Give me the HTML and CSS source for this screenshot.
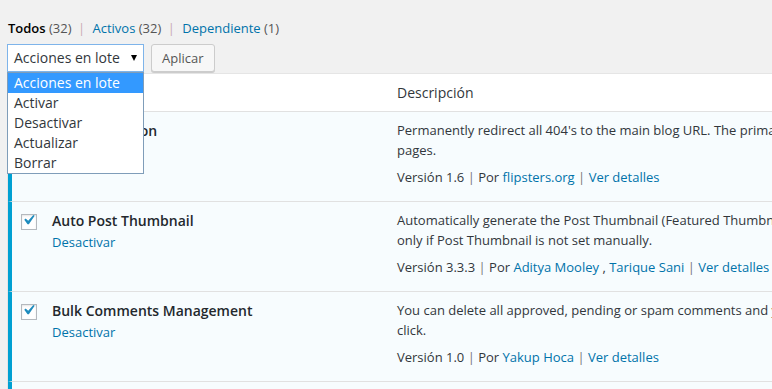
FILE: index.html
```html
<!DOCTYPE html>
<html lang="es">
<head>
  <meta charset="UTF-8">
  <title>Plugins</title>
  <link rel="stylesheet" href="styles.css">
</head>
<body>
  <div class="wrap">
    <ul class="subsubsub">
      <li class="current">Todos <span class="count">(32)</span></li>
      <li class="sep">|</li>
      <li><a href="#">Activos <span class="count">(32)</span></a></li>
      <li class="sep">|</li>
      <li><a href="#">Dependiente <span class="count">(1)</span></a></li>
    </ul>

    <div class="tablenav">
      <div class="bulk">
        <div class="select">Acciones en lote<span class="arrow"></span></div>
        <ul class="options">
          <li class="selected">Acciones en lote</li>
          <li>Activar</li>
          <li>Desactivar</li>
          <li>Actualizar</li>
          <li>Borrar</li>
        </ul>
      </div>
      <button class="button">Aplicar</button>
    </div>

    <table class="plugins">
      <colgroup>
        <col class="col-check">
        <col class="col-name">
        <col>
      </colgroup>
      <thead>
        <tr>
          <th class="check head-check"><span class="cb"></span></th>
          <th>Plugin</th>
          <th>Descripción</th>
        </tr>
      </thead>
      <tbody>
        <tr class="active">
          <th class="check"><span class="cb"><svg viewBox="3.5 5 14 14"><path d="M14.83 4.89l1.34.94-5.81 8.38H9.02L5.78 9.67l1.34-1.25 2.57 2.4z"/></svg></span></th>
          <td class="name">
            <strong>404 Redirection</strong>
            <a href="#">Desactivar</a>
          </td>
          <td class="desc">
            <p>Permanently redirect all 404's to the main blog URL. The primary purpose is to recover lost traffic from broken<br>pages.</p>
            <div class="meta">Versión 1.6 <span class="sep">|</span> Por <a href="#">flipsters.org</a> <span class="sep">|</span> <a href="#">Ver detalles</a></div>
          </td>
        </tr>
        <tr class="active">
          <th class="check"><span class="cb"><svg viewBox="3.5 5 14 14"><path d="M14.83 4.89l1.34.94-5.81 8.38H9.02L5.78 9.67l1.34-1.25 2.57 2.4z"/></svg></span></th>
          <td class="name">
            <strong>Auto Post Thumbnail</strong>
            <a href="#">Desactivar</a>
          </td>
          <td class="desc">
            <p>Automatically generate the Post Thumbnail (Featured Thumbnail) from the first image in post (or any custom post type)<br>only if Post Thumbnail is not set manually.</p>
            <div class="meta">Versión 3.3.3 <span class="sep">|</span> Por <a href="#">Aditya Mooley</a> , <a href="#">Tarique Sani</a> <span class="sep">|</span> <a href="#">Ver detalles</a></div>
          </td>
        </tr>
        <tr class="active">
          <th class="check"><span class="cb"><svg viewBox="3.5 5 14 14"><path d="M14.83 4.89l1.34.94-5.81 8.38H9.02L5.78 9.67l1.34-1.25 2.57 2.4z"/></svg></span></th>
          <td class="name">
            <strong>Bulk Comments Management</strong>
            <a href="#">Desactivar</a>
          </td>
          <td class="desc">
            <p>You can delete all approved, pending or spam comments and your trash comments with just one<br>click.</p>
            <div class="meta">Versión 1.0 <span class="sep">|</span> Por <a href="#">Yakup Hoca</a> <span class="sep">|</span> <a href="#">Ver detalles</a></div>
          </td>
        </tr>
        <tr class="active">
          <th class="check"><span class="cb"></span></th>
          <td class="name"><strong>&nbsp;</strong></td>
          <td class="desc"><p>&nbsp;</p></td>
        </tr>
      </tbody>
    </table>
  </div>
</body>
</html>
```

FILE: styles.css
```css
html, body {
  overflow: hidden;
}

body {
  margin: 0;
  background: #f1f1f1;
  font-family: 'Open Sans', 'Liberation Sans', sans-serif;
  color: #32373c;
}

a {
  color: #0073aa;
  text-decoration: none;
}

.wrap {
  width: 1100px;
  padding: 19px 0 0 7px;
}

/* filtros de estado */
.subsubsub {
  list-style: none;
  margin: 0 0 7px 1px;
  padding: 0;
  font-size: 13px;
  line-height: 18px;
  color: #666;
}
.subsubsub li {
  display: inline;
}
.subsubsub .current {
  color: #000;
  font-weight: 600;
}
.subsubsub .count {
  color: #555;
  font-weight: 400;
}
.subsubsub .sep {
  color: #c9a9b4;
  margin: 0 4px 0 3px;
}

/* acciones en lote */
.tablenav {
  display: flex;
  gap: 7px;
  height: 28px;
  margin-bottom: 1px;
}

.bulk {
  position: relative;
  width: 137px;
}

.select {
  box-sizing: border-box;
  height: 28px;
  padding-left: 6px;
  border: 1px solid #7eb4ea;
  background: #fff;
  font-size: 14px;
  line-height: 26px;
  color: #32373c;
  display: flex;
  align-items: center;
  justify-content: space-between;
}

.arrow {
  width: 0;
  height: 0;
  margin-right: 6px;
  border-left: 3.5px solid transparent;
  border-right: 3.5px solid transparent;
  border-top: 6px solid #000;
}

.options {
  position: absolute;
  top: 28px;
  left: 0;
  z-index: 2;
  box-sizing: border-box;
  width: 137px;
  margin: 0;
  padding: 0;
  list-style: none;
  border: 1px solid #7f9db9;
  background: #fff;
  font-size: 14px;
  line-height: 20px;
  color: #32373c;
}
.options li {
  padding-left: 6px;
}
.options .selected {
  background: #3399ff;
  color: #fff;
}

.button {
  height: 28px;
  padding: 0 10px 1px;
  border: 1px solid #ccc;
  border-radius: 3px;
  background: #f7f7f7;
  box-shadow: 0 1px 0 #ccc;
  font-family: inherit;
  font-size: 13px;
  line-height: 26px;
  color: #555;
}

/* tabla de plugins */
.plugins {
  width: 1100px;
  table-layout: fixed;
  border-spacing: 0;
  border: 1px solid #e5e5e5;
  border-right: 0;
  background: #fff;
}
.col-check {
  width: 34px;
}
.col-name {
  width: 345px;
}

.plugins thead th {
  padding: 8px 10px;
  border-bottom: 1px solid #e1e1e1;
  text-align: left;
  font-weight: 400;
  font-size: 14px;
  line-height: 21px;
  color: #32373c;
}
.plugins thead .head-check {
  padding: 10px 0 0 13px;
  vertical-align: top;
}

.plugins tbody td,
.plugins tbody th {
  vertical-align: top;
  border-bottom: 1px solid #e1e1e1;
  text-align: left;
}
.plugins .active td,
.plugins .active th {
  background: #f7fcfe;
}
.plugins .active .check {
  border-left: 4px solid #00a0d2;
}
.plugins tbody .check {
  padding: 12px 0 0 9px;
}

.cb {
  display: block;
  box-sizing: border-box;
  width: 16px;
  height: 16px;
  border: 1px solid #b4b9be;
  background: #fff;
  box-shadow: inset 0 1px 2px rgba(0, 0, 0, 0.1);
}
.cb svg {
  display: block;
  width: 14px;
  height: 14px;
  overflow: visible;
  fill: #1e8cbe;
}

.name {
  padding: 8px 10px;
  font-size: 13px;
  line-height: 20px;
}
.name strong {
  display: block;
  font-size: 14px;
  font-weight: 600;
  line-height: 22px;
  color: #23282d;
}

.desc {
  padding: 8px 10px 14px;
  font-size: 13px;
  line-height: 20px;
}
.desc p {
  margin: 0;
  white-space: nowrap;
}
.meta {
  margin-top: 7px;
  white-space: nowrap;
}
.meta .sep {
  color: #777;
}
```
